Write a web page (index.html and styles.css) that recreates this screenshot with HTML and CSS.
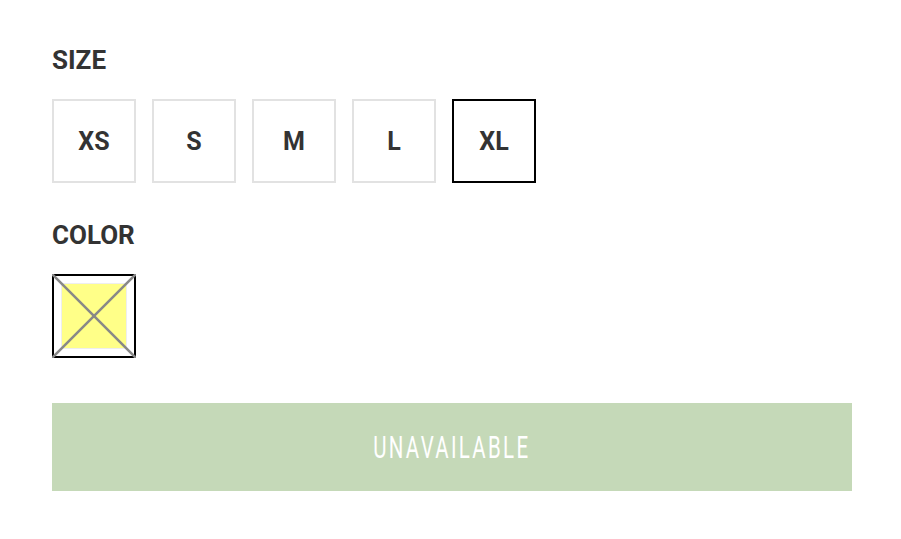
FILE: index.html
```html
<!DOCTYPE html>
<html lang="en">
  <head>
    <meta charset="UTF-8" />
    <meta name="viewport" content="width=device-width, initial-scale=1.0" />
    <title>Product Options</title>
    <link rel="stylesheet" href="styles.css">
  </head>
  <body>
    <div class="product-options">
      <!-- Size picker -->
      <div class="option-group">
        <h3 class="option-label">SIZE</h3>
        <div class="swatches">
          <span class="size-box">XS</span>
          <span class="size-box">S</span>
          <span class="size-box">M</span>
          <span class="size-box">L</span>
          <span class="size-box selected">XL</span>
        </div>
      </div>

      <!-- Color picker -->
      <div class="option-group">
        <h3 class="option-label">COLOR</h3>
        <div class="swatches">
          <span class="color-box selected sold-out">
            <span class="color-fill"></span>
            <svg class="cross" viewBox="0 0 84 84" preserveAspectRatio="none">
              <line x1="0" y1="0" x2="84" y2="84" />
              <line x1="84" y1="0" x2="0" y2="84" />
            </svg>
          </span>
        </div>
      </div>

      <button class="add-btn" disabled>
        <span class="add-btn-text">UNAVAILABLE</span>
      </button>
    </div>
  </body>
</html>
```

FILE: styles.css
```css
body {
  margin: 0;
  padding: 0;
  background-color: #fff;
  font-family: Roboto, "Liberation Sans", sans-serif;
  color: #333;
}

.product-options {
  width: 800px;
  padding: 45px 52px 0;
}

/* Option groups */
.option-group {
  margin-bottom: 37px;
}

.option-label {
  margin: 0 0 24px;
  font-size: 26px;
  font-weight: 700;
  line-height: 30px;
  color: #333;
}

.swatches {
  display: flex;
  gap: 16px;
}

.size-box {
  box-sizing: border-box;
  width: 84px;
  height: 84px;
  display: flex;
  align-items: center;
  justify-content: center;
  border: 2px solid #e2e2e2;
  font-size: 25px;
  font-weight: 700;
  color: #333;
}

.size-box.selected {
  border-color: #000;
}

/* Color swatch */
.color-box {
  position: relative;
  box-sizing: border-box;
  width: 84px;
  height: 84px;
  padding: 7px;
  border: 2px solid #e2e2e2;
  background-color: #fff;
}

.color-box.selected {
  border-color: #000;
}

.color-fill {
  display: block;
  height: 100%;
  box-sizing: border-box;
  border: 1px solid #eee;
  background-color: #ffff88;
}

.cross {
  position: absolute; /* sits over the swatch */
  top: -2px;
  left: -2px;
  width: 84px;
  height: 84px;
}

.cross line {
  stroke: #888;
  stroke-width: 2.5;
}

/* Add to cart button */
.add-btn {
  display: block;
  width: 800px;
  height: 88px;
  margin-top: 45px; /* collapses with the group margin */
  border: none;
  background-color: #c5d9b8;
  color: #fff;
  font-family: Roboto, sans-serif;
  padding: 0;
}

.add-btn-text {
  display: inline-block;
  font-size: 32px;
  font-weight: 400;
  letter-spacing: 3.6px;
  transform: scaleX(0.64);
}
```
